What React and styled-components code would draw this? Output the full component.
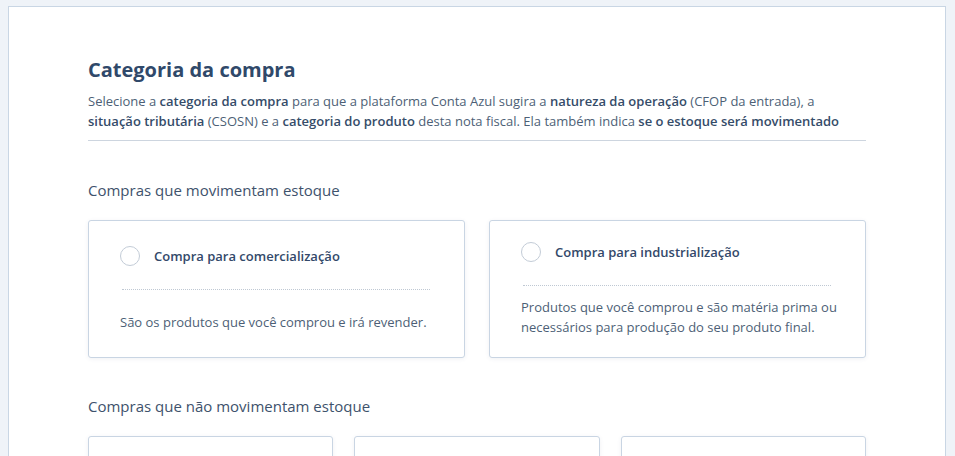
import React from "react";
import styled, { createGlobalStyle } from "styled-components";

const GlobalStyle = createGlobalStyle`
  html, body {
    margin: 0;
    background: #eff3f8;
    font-family: "Open Sans", "Liberation Sans", sans-serif;
    overflow: hidden;
  }
`;

const Page = styled.div`
  padding: 6px 9px 0 8px;
  height: 456px;
  box-sizing: border-box;
`;

const Panel = styled.div`
  background: #ffffff;
  border: 1px solid #c9d6e4;
  border-bottom: none;
  padding: 49px 79px 0 79px;
  height: 100%;
  box-sizing: border-box;
`;

const Header = styled.div`
  border-bottom: 1px solid #cdd5df;
  padding-bottom: 9px;
`;

const Title = styled.h1`
  margin: 0;
  font-size: 20px;
  line-height: 28px;
  font-weight: 700;
  color: #30496a;
`;

const Lead = styled.p`
  margin: 7px 0 0;
  font-size: 13px;
  line-height: 20px;
  color: #4d5f76;

  b {
    font-weight: 600;
    color: #354c69;
  }
`;

const SectionTitle = styled.h2`
  margin: ${(p) => p.$top}px 0 20px;
  font-size: 15px;
  line-height: 20px;
  font-weight: 400;
  color: #3e526c;
`;

const CardGrid = styled.div`
  display: grid;
  grid-template-columns: repeat(${(p) => p.$cols}, 1fr);
  column-gap: ${(p) => p.$gap}px;
  align-items: stretch;
`;

const Card = styled.div`
  border: 1px solid #c9d5e3;
  border-radius: 3px;
  background: #fff;
  box-shadow: 0 1px 4px rgba(60, 80, 110, 0.08);
  padding: 21px 28px 20px 31px;
  min-height: ${(p) => p.$minHeight || 0}px;
  display: flex;
  flex-direction: column;
`;

const OptionRow = styled.label`
  display: flex;
  align-items: center;
  gap: 14px;
  cursor: pointer;
  margin-top: ${(p) => p.$offset || 0}px;
`;

const Radio = styled.span`
  width: 18px;
  height: 18px;
  border: 1px solid #c3ccd7;
  border-radius: 50%;
  flex-shrink: 0;
  background: #fff;
`;

const OptionTitle = styled.span`
  font-size: 13px;
  font-weight: 600;
  line-height: 20px;
  color: #33496a;
`;

const Dotted = styled.hr`
  margin: 23px 6px 0 2px;
  border: none;
  border-top: 1px dotted #bfc8d3;
  height: 0;
`;

const OptionText = styled.p`
  margin: ${(p) => p.$gap}px 0 0;
  font-size: 13px;
  line-height: 20px;
  color: #4d5f76;
`;

const options = [
  {
    title: "Compra para comercialização",
    text: "São os produtos que você comprou e irá revender.",
    offset: 4,
    gap: 22,
  },
  {
    title: "Compra para industrialização",
    text: "Produtos que você comprou e são matéria prima ou necessários para produção do seu produto final.",
    offset: 0,
    gap: 11,
  },
];

const App = () => (
  <>
    <GlobalStyle />
    <Page>
      <Panel>
        <Header>
          <Title>Categoria da compra</Title>
          <Lead>
            Selecione a <b>categoria da compra</b> para que a plataforma Conta Azul sugira a{" "}
            <b>natureza da operação</b> (CFOP da entrada), a
            <br />
            <b>situação tributária</b> (CSOSN) e a <b>categoria do produto</b> desta nota fiscal.
            Ela também indica <b>se o estoque será movimentado</b>
          </Lead>
        </Header>

        <SectionTitle $top={39}>Compras que movimentam estoque</SectionTitle>
        <CardGrid $cols={2} $gap={24}>
          {options.map((o) => (
            <Card key={o.title}>
              <OptionRow $offset={o.offset}>
                <Radio />
                <OptionTitle>{o.title}</OptionTitle>
              </OptionRow>
              <Dotted />
              <OptionText $gap={o.gap}>{o.text}</OptionText>
            </Card>
          ))}
        </CardGrid>

        <SectionTitle $top={38}>Compras que não movimentam estoque</SectionTitle>
        <CardGrid $cols={3} $gap={21}>
          <Card $minHeight={120} />
          <Card $minHeight={120} />
          <Card $minHeight={120} />
        </CardGrid>
      </Panel>
    </Page>
  </>
);

export default App;
